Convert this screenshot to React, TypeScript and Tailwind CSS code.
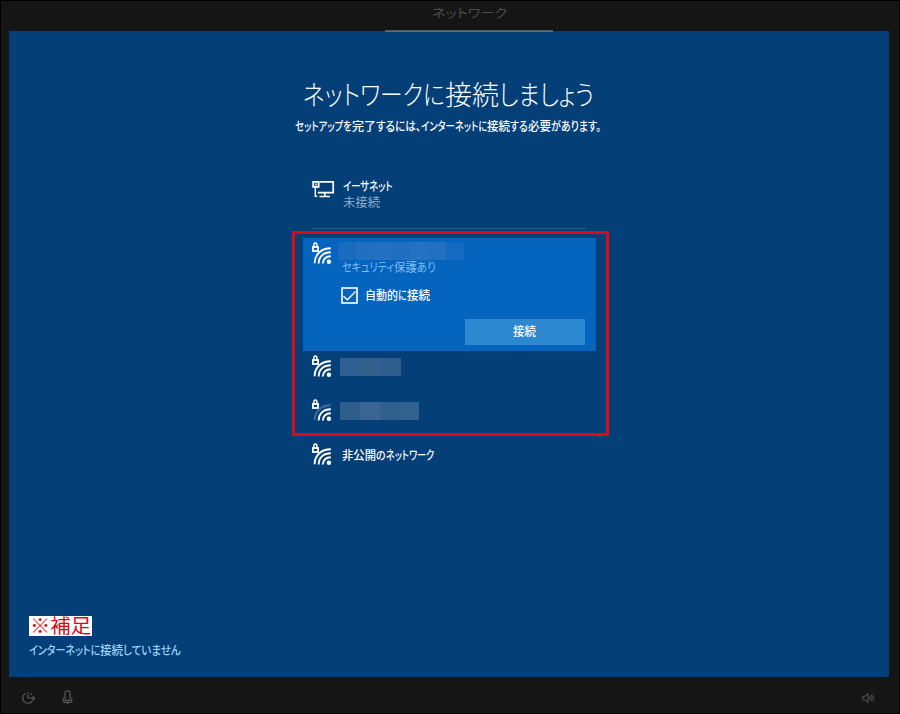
import { useLayoutEffect, useRef, useState } from 'react';

type Part = [string, number];

/** A run of text condensed horizontally to the width it is given. */
function Run({ text, width }: { text: string; width: number }) {
  const ref = useRef<HTMLSpanElement>(null);
  const [scale, setScale] = useState(1);
  useLayoutEffect(() => {
    if (ref.current) setScale(width / ref.current.offsetWidth);
  }, [text, width]);
  return (
    <span className="inline-block" style={{ width }}>
      <span
        ref={ref}
        className="inline-block origin-left whitespace-nowrap [font-feature-settings:'palt']"
        style={{ transform: `scaleX(${scale})` }}
      >
        {text}
      </span>
    </span>
  );
}

function Text({ parts, className }: { parts: Part[]; className: string }) {
  return (
    <div className={`flex whitespace-nowrap ${className}`}>
      {parts.map(([text, width]) => (
        <Run key={text} text={text} width={width} />
      ))}
    </div>
  );
}

function WifiIcon({ weak = false }: { weak?: boolean }) {
  return (
    <svg width="22" height="24" viewBox="0 0 22 24" fill="none" stroke="#fff" className="shrink-0">
      <path d="M2.9 6V3.6a1.5 1.5 0 0 1 3 0V6" strokeWidth="1.5" />
      <rect x="1.9" y="6" width="5.2" height="4" strokeWidth="1.8" />
      <g strokeWidth="1.9">
        <path d="M3.6 22.3C3.6 13.6 10.2 7.3 19.8 7.3" stroke={weak ? '#3d6b9d' : '#fff'} />
        <path d="M7.7 22.5C7.7 15.7 12.4 11.3 19.8 11.3" />
        <path d="M11.9 22.5C11.9 18.1 14.9 15.2 19.8 15.2" />
      </g>
      <circle cx="17.9" cy="20.7" r="2.2" fill="#fff" stroke="none" />
    </svg>
  );
}

function EthernetIcon() {
  return (
    <svg width="23" height="19" viewBox="0 0 23 19" fill="none" stroke="#fff" className="shrink-0">
      <path d="M7.5 1.9H21.2V12.6H5.8" strokeWidth="1.7" />
      <rect x="1.2" y="1.9" width="5.4" height="5" strokeWidth="1.8" />
      <path d="M3.3 6.2V16.3H5.2M3.9 3.4v2" strokeWidth="1.4" />
      <path d="M12.8 12.8V16.3M7.5 16.5H17.8" strokeWidth="1.7" />
    </svg>
  );
}

function Mosaic({ className, cells }: { className: string; cells: string[] }) {
  return (
    <div className={`flex overflow-hidden ${className}`}>
      {cells.map((c, i) => (
        <div key={i} className={`h-full flex-1 ${c}`} />
      ))}
    </div>
  );
}

export default function App() {
  return (
    <div className="relative flex h-[714px] w-[900px] flex-col overflow-hidden border border-black bg-[#151515] font-['Noto_Sans_CJK_JP',sans-serif]">
      <header className="flex h-[30px] flex-col items-center pl-[38px]">
        <div className="h-[28px] pt-[3px]">
          <Text className="text-[12.5px] leading-[18px] text-[#4b4b4b]" parts={[['ネットワーク', 75]]} />
        </div>
      </header>

      <main className="ml-2 flex h-[646px] w-[880px] flex-col bg-[#043f78] text-white">
        <div className="ml-[376px] h-px w-[168px] shrink-0 bg-[#5d7079] shadow-[0_-1px_0_#4f5a60]" />
        <div className="ml-[294px] mt-[42px] h-[40px]">
          <Text
            className="text-[27px] font-light leading-[40px]"
            parts={[['ネットワークに', 142], ['接続', 54], ['しましょう', 95]]}
          />
        </div>
        <div className="ml-[286px] mt-[3px] h-[18px]">
          <Text
            className="text-[12px] font-medium leading-[18px]"
            parts={[
              ['セットアップを', 57],
              ['完了', 24],
              ['するには、', 45],
              ['インターネットに', 66],
              ['接続', 23],
              ['する', 18],
              ['必要', 23],
              ['があります。', 50],
            ]}
          />
        </div>

        <section className="ml-[294px] mt-[43px] flex w-[293px] flex-col">
          <div className="ml-[9px] flex h-[51px] w-[274px] gap-[8px] border-b border-[#2b5f98]">
            <div className="pt-[2px]">
              <EthernetIcon />
            </div>
            <div>
              <Text className="text-[12px] font-medium leading-[15px]" parts={[['イーサネット', 50]]} />
              <Text className="mt-[1px] text-[12px] leading-[16px] text-[#8cb0d2]" parts={[['未接続', 37]]} />
            </div>
          </div>

          <div className="mt-[9px] flex h-[113px] bg-[#0464be] pl-[8px]">
            <div className="pt-[3px]">
              <WifiIcon />
            </div>
            <div className="ml-[5px] flex flex-1 flex-col pt-[4px]">
              <Mosaic
                className="h-[18px] w-[126px]"
                cells={['bg-[#196bc0]', 'bg-[#206fc1]', 'bg-[#2370c1]', 'bg-[#206fc1]', 'bg-[#2572c2]', 'bg-[#2270c2]', 'bg-[#146ac1]']}
              />
              <Text
                className="-mt-px ml-[4px] text-[12px] leading-[16px] text-[#7fbdf0]"
                parts={[['セキュリティ', 52], ['保護', 23], ['あり', 19]]}
              />
              <label className="ml-[3px] mt-[11px] flex h-[18px] items-center gap-[7px]">
                <svg width="17" height="17" viewBox="0 0 17 17" fill="none" stroke="#fff">
                  <rect x="1" y="1" width="15" height="15" strokeWidth="1.6" />
                  <path d="M2.5 9.2L6.4 12.8L14.5 4.5" strokeWidth="1.3" />
                </svg>
                <Text className="text-[12px] font-medium leading-[18px]" parts={[['自動的', 33], ['に', 9], ['接続', 23]]} />
              </label>
              <button className="ml-[127px] mt-[15px] flex h-[26px] w-[120px] items-center justify-center bg-[#2d88d2] pb-[2px] pr-px">
                <Text className="text-[12px] font-medium leading-[18px]" parts={[['接続', 23]]} />
              </button>
            </div>
          </div>

          <div className="ml-[8px] flex h-[44px] gap-[7px] pt-[3px]">
            <WifiIcon />
            <Mosaic className="mt-[4px] h-[18px] w-[61px]" cells={['bg-[#2d5f90]', 'bg-[#335f8d]', 'bg-[#2d5d8c]']} />
          </div>
          <div className="ml-[8px] flex h-[44px] gap-[7px] pt-[3px]">
            <WifiIcon weak />
            <Mosaic className="mt-[4px] h-[18px] w-[79px]" cells={['bg-[#2e5e8c]', 'bg-[#3b6694]', 'bg-[#315f8e]', 'bg-[#32618f]']} />
          </div>
          <div className="ml-[8px] flex h-[44px] gap-[9px] pt-[3px]">
            <WifiIcon />
            <Text
              className="mt-[4px] h-[18px] text-[12px] font-medium leading-[18px]"
              parts={[['非公開', 34], ['の', 10], ['ネットワーク', 48]]}
            />
          </div>
        </section>

        <footer className="ml-[20px] mt-auto flex flex-col items-start pb-[18px]">
          <div className="flex h-[20px] w-[63px] items-center justify-center bg-white">
            <Text className="pb-[3px] text-[19px] leading-[17px] text-[#d80c18]" parts={[['※補足', 61]]} />
          </div>
          <Text
            className="mt-[5px] text-[12px] font-medium leading-[18px] text-[#9fd3f5]"
            parts={[['インターネットに', 71], ['接続', 23], ['していません', 58]]}
          />
        </footer>
      </main>

      <nav className="flex h-[36px] items-center px-[20px] pt-[5px] text-[#5c5c5c]">
        <svg width="15" height="14" viewBox="0 0 15 14" fill="none" stroke="currentColor" strokeWidth="1.1">
          <path d="M5.2 2.2A5.2 5.2 0 1 0 11.8 9M7 3.2V7H13.5M11.7 5.2L13.7 7L11.7 8.8" />
          <path d="M7 1.8A5.2 5.2 0 0 1 11 4.2" strokeDasharray="1.5 1.3" />
        </svg>
        <svg className="ml-[26px]" width="11" height="15" viewBox="0 0 11 15" fill="none" stroke="currentColor" strokeWidth="1.1">
          <rect x="3" y="1" width="5" height="9.5" rx="1" />
          <path d="M1.2 7.5V10a2.5 2.5 0 0 0 2.5 2.4H7.3A2.5 2.5 0 0 0 9.8 10V7.5M5.5 12.4V14.5" />
        </svg>
        <svg className="ml-auto mr-[4px]" width="13" height="12" viewBox="0 0 13 12" fill="none" stroke="currentColor" strokeWidth="1">
          <path d="M.8 4.2H3L6 1.5V10.5L3 7.8H.8ZM7.8 4.3Q8.8 6 7.8 7.7M9.4 2.8Q11.3 6 9.4 9.2" />
          <path d="M11 1.5Q13.5 6 11 10.5" opacity=".5" />
        </svg>
      </nav>

      <div className="pointer-events-none absolute left-[291px] top-[230px] h-[205px] w-[317px] border-[3px] border-[#dc0b16]" />
    </div>
  );
}
